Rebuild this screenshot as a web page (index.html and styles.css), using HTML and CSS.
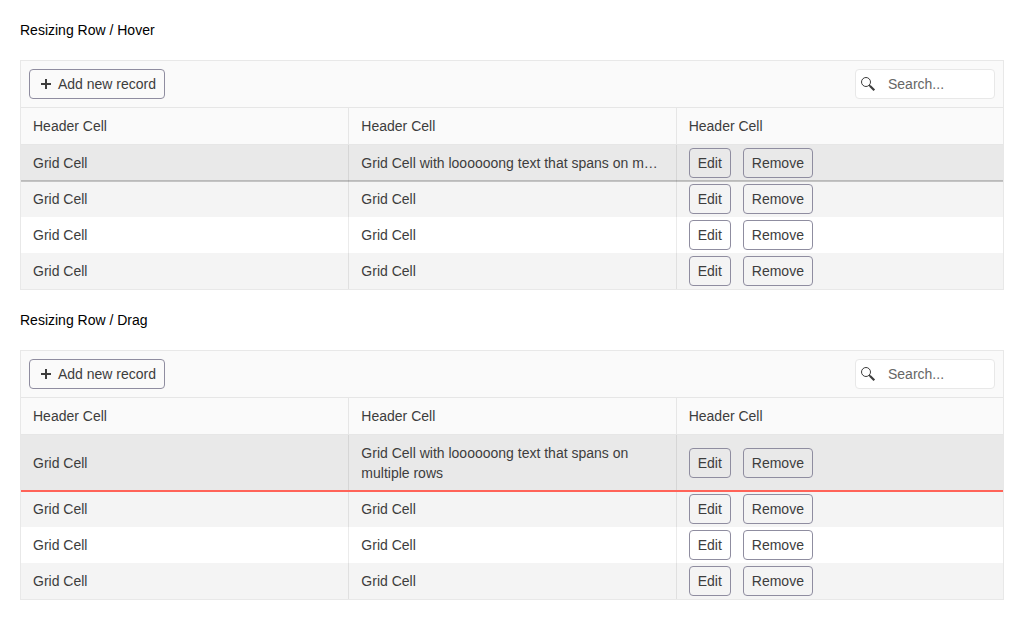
FILE: index.html
```html
<!DOCTYPE html>
<html lang="en">
<head>
<meta charset="utf-8">
<title>Grid row resizing</title>
<link rel="stylesheet" href="styles.css">
</head>
<body>
<main id="app"></main>
<script src="app.js"></script>
</body>
</html>
```
FILE: app.js
```js
const cell = (text, extra = "") => `<div class="cell ${extra}">${text}</div>`;
const commands = `<div class="cell commands"><button class="button">Edit</button><button class="button">Remove</button></div>`;
const row = (text, state = "") => `<div class="row ${state}">${cell("Grid Cell")}${cell(`<span class="text">${text}</span>`)}${commands}</div>`;

const grid = (title, firstText, state) => `
<section class="example">
  <h2 class="title">${title}</h2>
  <div class="grid">
    <div class="toolbar">
      <button class="button add">
        <svg class="icon" viewBox="0 0 16 16"><path d="M8 3v10M3 8h10" stroke="currentColor" stroke-width="2" fill="none"/></svg>
        <span>Add new record</span>
      </button>
      <div class="search">
        <svg class="icon" viewBox="0 0 16 16"><circle cx="6" cy="6" r="4.5" stroke="currentColor" fill="none"/><path d="M9 9 10.5 10.5" stroke="currentColor" stroke-width="1.2"/><path d="M10 10 14.3 14.3" stroke="currentColor" stroke-width="2.2"/></svg>
        <input class="search-input" placeholder="Search...">
      </div>
    </div>
    <div class="row header">${cell("Header Cell").repeat(3)}</div>
    <div class="body">
      ${row(firstText, "active " + state)}
      ${row("Grid Cell").repeat(3)}
    </div>
  </div>
</section>`;

const longText = "Grid Cell with loooooong text that spans on multiple rows";
document.getElementById("app").innerHTML =
  grid("Resizing Row / Hover", longText, "hover") +
  grid("Resizing Row / Drag", longText, "drag");
```
FILE: styles.css
```css
* { box-sizing: border-box; }
body { margin: 0; background: #fff; color: #000; font: 14px/20px "Liberation Sans", Arial, sans-serif; }
#app { padding: 20px; display: flex; flex-direction: column; gap: 20px; }
.example { display: flex; flex-direction: column; gap: 20px; }
.title { margin: 0; font-size: 14px; font-weight: 400; line-height: 20px; }
.grid { border: 1px solid #e8e8e8; color: #3d3d3d; background: #fff; }
.toolbar { height: 47px; padding: 8px; display: flex; justify-content: space-between; background: #fafafa; border-bottom: 1px solid #e6e6e6; }
.button { height: 30px; padding: 4px 8px; border: 1px solid #8f8da0; border-radius: 4px; background: transparent; color: #3d3d3d; font: inherit; white-space: nowrap; }
.add { display: flex; align-items: center; gap: 4px; }
.icon { width: 16px; height: 16px; flex: none; }
.search { width: 140px; height: 30px; padding-left: 4px; display: flex; align-items: center; background: #fff; border: 1px solid #e8e8e8; border-radius: 4px; }
.search-input { min-width: 0; flex: 1; padding: 4px 12px; border: 0; outline: 0; background: transparent; color: #3d3d3d; font: inherit; }
.search-input::placeholder { color: #666; opacity: 1; }
.row { display: grid; grid-template-columns: repeat(3, minmax(0, 1fr)); min-height: 36px; }
.row:nth-child(even) { background: #f4f4f4; }
.row.header { height: 37px; background: #fafafa; border-bottom: 1px solid #e6e6e6; }
.cell { display: flex; align-items: center; padding: 0 12px; border-left: 1px solid rgba(0, 0, 0, .08); }
.cell:first-child { border-left-color: transparent; padding-left: 11px; }
.commands { gap: 12px; }
.active { position: relative; background: #e9e9e9; }
.hover .text { overflow: hidden; text-overflow: ellipsis; white-space: nowrap; }
.drag { height: 56px; }
.active::after { content: ""; position: absolute; left: 0; right: 0; bottom: -1px; height: 2px; background: rgba(0, 0, 0, .2); }
.drag::after { background: #ff6358; }
```
